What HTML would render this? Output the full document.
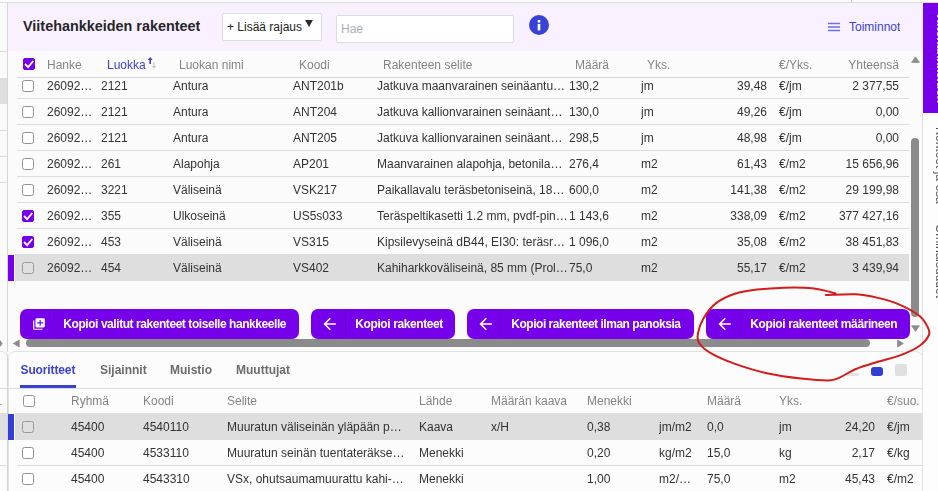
<!DOCTYPE html>
<html><head><meta charset="utf-8"><title>Viitehankkeiden rakenteet</title>
<style>
*{box-sizing:border-box;margin:0;padding:0}
html,body{width:938px;height:491px;overflow:hidden;background:#fff}
body{font-family:"Liberation Sans",sans-serif;font-size:12px;color:#333;position:relative}
.abs,.t,.cb,.ln,.btn{position:absolute}
.t{white-space:nowrap;line-height:14px;height:14px;overflow:hidden}
.el{text-overflow:ellipsis}
.r{text-align:right}
.h{color:#848484}
.cb{width:12px;height:12px;border:1px solid #929292;border-radius:2.5px;background:#fff}
.cb.dim{background:#e0e0e0;border-color:#9a9a9a}
.cb.on{background:#7600ea;border-color:#7600ea;border-radius:2px}
.cb.on svg{position:absolute;left:-1px;top:-1px}
.ln{height:1px;background:#dcdcdc}
.btn{height:30px;top:309px;background:#7600ea;border-radius:7px;color:#fff;font-weight:bold}
.btn .dv{position:absolute;left:34px;top:2px;bottom:2px;width:1px;background:#6a00d4}
.btn .tx{position:absolute;left:44px;top:8px;line-height:14px;white-space:nowrap;letter-spacing:-0.4px}
.btn svg{position:absolute}
.tab{position:absolute;top:363px;font-weight:bold;color:#6b6b6b;line-height:14px;white-space:nowrap}
</style></head><body>

<div class="abs" style="left:0;top:0;width:938px;height:491px;background:#fbfbfb"></div>
<div class="abs" style="left:8px;top:3px;width:915px;height:48px;background:#f9f1ff"></div>
<div class="abs" style="left:222px;top:13px;width:100px;height:28px;background:#fff;border:1px solid #dcdcdc;border-radius:2px"></div>
<div class="abs" style="left:336px;top:15px;width:178px;height:28px;background:#fff;border:1px solid #dcdcdc;border-radius:2px"></div>
<div class="t" style="left:23px;top:17px;font-size:14.4px;font-weight:bold;color:#262626;line-height:18px;height:18px">Viitehankkeiden rakenteet</div>
<div class="t" style="left:227px;top:20px;color:#222">+ Lisää rajaus</div>
<div class="t" style="left:341px;top:22px;color:#a9adb8">Hae</div>
<div class="t" style="left:849px;top:20px;color:#3942d6">Toiminnot</div>
<div id="g" style="position:absolute;left:0;top:0;width:938px;height:491px;will-change:transform">
<div class="abs" style="left:0;top:3px;width:7px;height:348px;background:#fafafa"></div>
<div class="abs" style="left:0;top:78px;width:7px;height:26px;background:#dedede"></div>
<div class="abs" style="left:7px;top:3px;width:1px;height:349px;background:#d6d6d6"></div>
<div class="abs" style="left:0;top:51px;width:7px;height:1px;background:#d8d8d8"></div>
<div class="abs" style="left:0;top:130px;width:7px;height:1px;background:#dcdcdc"></div>
<div class="abs" style="left:0;top:156px;width:7px;height:1px;background:#dcdcdc"></div>
<div class="abs" style="left:0;top:182px;width:7px;height:1px;background:#dcdcdc"></div>
<div class="abs" style="left:0;top:0;width:938px;height:2px;background:#fdfdfd"></div>
<div class="abs" style="left:0;top:2px;width:938px;height:1px;background:#dadada"></div>
<div class="abs" style="left:851px;top:0;width:1px;height:2px;background:#ccc"></div>
<svg class="abs" style="left:305px;top:20px" width="8" height="7" viewBox="0 0 8 7"><path d="M0.1 0.1 L7.9 0.1 L4 7 Z" fill="#2c2c2c"/></svg>
<svg class="abs" style="left:529px;top:15px" width="20" height="20" viewBox="0 0 20 20"><circle cx="10" cy="10" r="10" fill="#3942d6"/><rect x="8.7" y="5" width="2.6" height="2.5" fill="#fff"/><rect x="8.7" y="8.9" width="2.6" height="6.5" fill="#fff"/></svg>
<svg class="abs" style="left:828px;top:22px" width="12" height="10" viewBox="0 0 12 10"><path d="M0 1.6H12M0 5H12M0 8.4H12" stroke="#6a70e2" stroke-width="1.5"/></svg>
<div class="abs" style="left:923px;top:3px;width:15px;height:110px;background:#7600ea"></div>
<div class="abs" style="left:923px;top:113px;width:15px;height:378px;background:#fdfdfd"></div>
<div class="abs" style="left:922px;top:113px;width:1px;height:378px;background:#e0e0e0"></div>
<div class="abs" style="left:948px;top:12px;width:100px;height:14px;transform-origin:0 0;transform:rotate(90deg);color:#fff;font-weight:bold;font-size:12px;line-height:14px;white-space:nowrap">Viitehankkeiden</div>
<div class="abs" style="left:947px;top:127px;width:90px;height:14px;transform-origin:0 0;transform:rotate(90deg);color:#555;font-size:12px;line-height:14px;white-space:nowrap">Kohteet ja osa</div>
<div class="abs" style="left:947px;top:224px;width:90px;height:14px;transform-origin:0 0;transform:rotate(90deg);color:#555;font-size:12px;line-height:14px;white-space:nowrap">Ominaisuudet</div>
<div class="cb on" style="left:23px;top:58px"><svg viewBox="0 0 12 12" width="12" height="12"><path d="M2 6 L5.1 9.1 L10.3 3" fill="none" stroke="#fff" stroke-width="1.8"/></svg></div>
<div class="t h" style="left:47px;top:58px">Hanke</div>
<div class="t h" style="left:179px;top:58px">Luokan nimi</div>
<div class="t h" style="left:299px;top:58px">Koodi</div>
<div class="t h" style="left:383px;top:58px">Rakenteen selite</div>
<div class="t h" style="left:575px;top:58px">Määrä</div>
<div class="t h" style="left:647px;top:58px">Yks.</div>
<div class="t h" style="left:779px;top:58px">€/Yks.</div>
<div class="t" style="left:107px;top:58px;color:#3942d6">Luokka</div>
<svg class="abs" style="left:146px;top:56px" width="12" height="14" viewBox="0 0 12 14"><path d="M4.2 1 L1.7 4.1 H3.4 V8 H5 V4.1 H6.7 Z" fill="#3942d6"/><path d="M8 12.7 L5.8 9.9 H7.4 V6 H8.6 V9.9 H10.2 Z" fill="#c8c8c8"/></svg>
<div class="t h r" style="left:799px;width:100px;top:58px">Yhteensä</div>
<div class="ln" style="left:17px;top:77px;width:892px;background:#d6d6d6"></div>
<div class="abs" style="left:8px;top:78px;width:901px;height:225px;overflow:hidden">
<div class="ln" style="left:9px;top:20px;width:892px"></div>
<div class="cb" style="left:14px;top:2px"></div>
<div class="t el" style="left:39px;top:1px;width:60px">26092…</div>
<div class="t" style="left:93px;top:1px">2121</div>
<div class="t" style="left:165px;top:1px">Antura</div>
<div class="t" style="left:285px;top:1px">ANT201b</div>
<div class="t" style="left:369px;top:1px;width:196px">Jatkuva maanvarainen seinäantu…</div>
<div class="t" style="left:561px;top:1px">130,2</div>
<div class="t" style="left:633px;top:1px">jm</div>
<div class="t r" style="left:659px;width:100px;top:1px">39,48</div>
<div class="t" style="left:771px;top:1px">€/jm</div>
<div class="t r" style="left:791px;width:100px;top:1px">2 377,55</div>
<div class="ln" style="left:9px;top:46px;width:892px"></div>
<div class="cb" style="left:14px;top:28px"></div>
<div class="t el" style="left:39px;top:27px;width:60px">26092…</div>
<div class="t" style="left:93px;top:27px">2121</div>
<div class="t" style="left:165px;top:27px">Antura</div>
<div class="t" style="left:285px;top:27px">ANT204</div>
<div class="t" style="left:369px;top:27px;width:196px">Jatkuva kallionvarainen seinäant…</div>
<div class="t" style="left:561px;top:27px">130,0</div>
<div class="t" style="left:633px;top:27px">jm</div>
<div class="t r" style="left:659px;width:100px;top:27px">49,26</div>
<div class="t" style="left:771px;top:27px">€/jm</div>
<div class="t r" style="left:791px;width:100px;top:27px">0,00</div>
<div class="ln" style="left:9px;top:72px;width:892px"></div>
<div class="cb" style="left:14px;top:54px"></div>
<div class="t el" style="left:39px;top:53px;width:60px">26092…</div>
<div class="t" style="left:93px;top:53px">2121</div>
<div class="t" style="left:165px;top:53px">Antura</div>
<div class="t" style="left:285px;top:53px">ANT205</div>
<div class="t" style="left:369px;top:53px;width:196px">Jatkuva kallionvarainen seinäant…</div>
<div class="t" style="left:561px;top:53px">298,5</div>
<div class="t" style="left:633px;top:53px">jm</div>
<div class="t r" style="left:659px;width:100px;top:53px">48,98</div>
<div class="t" style="left:771px;top:53px">€/jm</div>
<div class="t r" style="left:791px;width:100px;top:53px">0,00</div>
<div class="ln" style="left:9px;top:98px;width:892px"></div>
<div class="cb" style="left:14px;top:80px"></div>
<div class="t el" style="left:39px;top:79px;width:60px">26092…</div>
<div class="t" style="left:93px;top:79px">261</div>
<div class="t" style="left:165px;top:79px">Alapohja</div>
<div class="t" style="left:285px;top:79px">AP201</div>
<div class="t" style="left:369px;top:79px;width:196px">Maanvarainen alapohja, betonila…</div>
<div class="t" style="left:561px;top:79px">276,4</div>
<div class="t" style="left:633px;top:79px">m2</div>
<div class="t r" style="left:659px;width:100px;top:79px">61,43</div>
<div class="t" style="left:771px;top:79px">€/m2</div>
<div class="t r" style="left:791px;width:100px;top:79px">15 656,96</div>
<div class="ln" style="left:9px;top:124px;width:892px"></div>
<div class="cb" style="left:14px;top:106px"></div>
<div class="t el" style="left:39px;top:105px;width:60px">26092…</div>
<div class="t" style="left:93px;top:105px">3221</div>
<div class="t" style="left:165px;top:105px">Väliseinä</div>
<div class="t" style="left:285px;top:105px">VSK217</div>
<div class="t" style="left:369px;top:105px;width:196px">Paikallavalu teräsbetoniseinä, 18…</div>
<div class="t" style="left:561px;top:105px">600,0</div>
<div class="t" style="left:633px;top:105px">m2</div>
<div class="t r" style="left:659px;width:100px;top:105px">141,38</div>
<div class="t" style="left:771px;top:105px">€/m2</div>
<div class="t r" style="left:791px;width:100px;top:105px">29 199,98</div>
<div class="ln" style="left:9px;top:150px;width:892px"></div>
<div class="cb on" style="left:14px;top:132px"><svg viewBox="0 0 12 12" width="12" height="12"><path d="M2 6 L5.1 9.1 L10.3 3" fill="none" stroke="#fff" stroke-width="1.8"/></svg></div>
<div class="t el" style="left:39px;top:131px;width:60px">26092…</div>
<div class="t" style="left:93px;top:131px">355</div>
<div class="t" style="left:165px;top:131px">Ulkoseinä</div>
<div class="t" style="left:285px;top:131px">US5s033</div>
<div class="t" style="left:369px;top:131px;width:196px">Teräspeltikasetti 1.2 mm, pvdf-pin…</div>
<div class="t" style="left:561px;top:131px">1 143,6</div>
<div class="t" style="left:633px;top:131px">m2</div>
<div class="t r" style="left:659px;width:100px;top:131px">338,09</div>
<div class="t" style="left:771px;top:131px">€/m2</div>
<div class="t r" style="left:791px;width:100px;top:131px">377 427,16</div>
<div class="ln" style="left:9px;top:176px;width:892px"></div>
<div class="cb on" style="left:14px;top:158px"><svg viewBox="0 0 12 12" width="12" height="12"><path d="M2 6 L5.1 9.1 L10.3 3" fill="none" stroke="#fff" stroke-width="1.8"/></svg></div>
<div class="t el" style="left:39px;top:157px;width:60px">26092…</div>
<div class="t" style="left:93px;top:157px">453</div>
<div class="t" style="left:165px;top:157px">Väliseinä</div>
<div class="t" style="left:285px;top:157px">VS315</div>
<div class="t" style="left:369px;top:157px;width:196px">Kipsilevyseinä dB44, EI30: teräsr…</div>
<div class="t" style="left:561px;top:157px">1 096,0</div>
<div class="t" style="left:633px;top:157px">m2</div>
<div class="t r" style="left:659px;width:100px;top:157px">35,08</div>
<div class="t" style="left:771px;top:157px">€/m2</div>
<div class="t r" style="left:791px;width:100px;top:157px">38 451,83</div>
<div class="abs" style="left:7px;top:176px;width:894px;height:27px;background:#dedede"></div>
<div class="abs" style="left:0;top:177px;width:6px;height:26px;background:#7600ea"></div>
<div class="cb dim" style="left:14px;top:184px"></div>
<div class="t el" style="left:39px;top:183px;width:60px">26092…</div>
<div class="t" style="left:93px;top:183px">454</div>
<div class="t" style="left:165px;top:183px">Väliseinä</div>
<div class="t" style="left:285px;top:183px">VS402</div>
<div class="t" style="left:369px;top:183px;width:196px">Kahiharkkoväliseinä, 85 mm (Prol…</div>
<div class="t" style="left:561px;top:183px">75,0</div>
<div class="t" style="left:633px;top:183px">m2</div>
<div class="t r" style="left:659px;width:100px;top:183px">55,17</div>
<div class="t" style="left:771px;top:183px">€/m2</div>
<div class="t r" style="left:791px;width:100px;top:183px">3 439,94</div>
</div>
<svg class="abs" style="left:910px;top:55px" width="11" height="9" viewBox="0 0 11 9"><path d="M5.5 1.8 L9.4 7.4 H1.6 Z" fill="#8b8b8b" stroke="#8b8b8b" stroke-width="0.8" stroke-linejoin="round"/></svg>
<div class="abs" style="left:911px;top:138px;width:8px;height:179px;background:#8b8b8b;border-radius:4px"></div>
<svg class="abs" style="left:910px;top:324px" width="11" height="9" viewBox="0 0 11 9"><path d="M5.5 7.4 L9.4 1.8 H1.6 Z" fill="#8b8b8b" stroke="#8b8b8b" stroke-width="0.8" stroke-linejoin="round"/></svg>
<div class="btn" style="left:20px;width:279px"><svg style="left:12px;top:8px" width="14" height="14" viewBox="0 0 24 24"><path fill="#fff" d="M4 6H2v14c0 1.1.9 2 2 2h14v-2H4V6zm16-4H8c-1.1 0-2 .9-2 2v12c0 1.1.9 2 2 2h12c1.100 0 2-.9 2-2V4c0-1.100-.9-2-2-2zm-1 9h-4v4h-2v-4H9V9h4V5h2v4h4v2z"/></svg><div class="dv"></div><div class="tx" style="letter-spacing:-0.44px;left:43.3px">Kopioi valitut rakenteet toiselle hankkeelle</div></div>
<div class="btn" style="left:311px;width:144px"><svg style="left:12px;top:8px" width="14" height="14" viewBox="0 0 14 14"><path d="M12.8 7 H1.8 M7.3 1.3 L1.6 7 L7.3 12.7" fill="none" stroke="#fff" stroke-width="1.6"/></svg><div class="dv"></div><div class="tx" style="letter-spacing:-0.4px;left:44.3px">Kopioi rakenteet</div></div>
<div class="btn" style="left:467px;width:227px"><svg style="left:12px;top:8px" width="14" height="14" viewBox="0 0 14 14"><path d="M12.8 7 H1.8 M7.3 1.3 L1.6 7 L7.3 12.7" fill="none" stroke="#fff" stroke-width="1.6"/></svg><div class="dv"></div><div class="tx" style="letter-spacing:-0.48px;left:44.3px">Kopioi rakenteet ilman panoksia</div></div>
<div class="btn" style="left:706px;width:204px"><svg style="left:12px;top:8px" width="14" height="14" viewBox="0 0 14 14"><path d="M12.8 7 H1.8 M7.3 1.3 L1.6 7 L7.3 12.7" fill="none" stroke="#fff" stroke-width="1.6"/></svg><div class="dv"></div><div class="tx" style="letter-spacing:-0.4px;left:44.3px">Kopioi rakenteet määrineen</div></div>
<svg class="abs" style="left:0;top:339px" width="3" height="9" viewBox="0 0 3 9"><path d="M0 1 L2.6 4.5 L0 8 Z" fill="#8b8b8b"/></svg>
<svg class="abs" style="left:12px;top:339px" width="9" height="9" viewBox="0 0 9 9"><path d="M1.4 4.5 L7.2 1 V8 Z" fill="#8b8b8b" stroke="#8b8b8b" stroke-width="0.8" stroke-linejoin="round"/></svg>
<div class="abs" style="left:26px;top:339px;width:844px;height:8px;background:#8b8b8b;border-radius:4px"></div>
<svg class="abs" style="left:896px;top:339px" width="9" height="9" viewBox="0 0 9 9"><path d="M7.4 4.5 L1.6 1 V8 Z" fill="#8b8b8b" stroke="#8b8b8b" stroke-width="0.8" stroke-linejoin="round"/></svg>
<div class="abs" style="left:0;top:351px;width:8px;height:141px;background:#fbfbfb;border-top:1px solid #e2e2e2;border-right:1px solid #d4d4d4;border-top-right-radius:6px"></div>
<div class="abs" style="left:8px;top:351px;width:915px;height:150px;background:#fcfcfc;border:1px solid #e2e2e2;border-radius:7px 7px 0 0"></div>
<div class="abs" style="left:0;top:413px;width:7px;height:27px;background:#dedede"></div>
<div class="abs" style="left:0;top:404px;width:2px;height:1px;background:#aaa"></div>
<div class="abs" style="left:0;top:388px;width:7px;height:1px;background:#dcdcdc"></div>
<div class="abs" style="left:0;top:465px;width:7px;height:1px;background:#dcdcdc"></div>
<div class="tab" style="left:20.5px;color:#3942d6;letter-spacing:-0.12px">Suoritteet</div>
<div class="tab" style="left:100px">Sijainnit</div>
<div class="tab" style="left:170px">Muistio</div>
<div class="tab" style="left:236px">Muuttujat</div>
<div class="abs" style="left:20px;top:385px;width:56px;height:3px;background:#3942d6"></div>
<div class="ln" style="left:9px;top:388px;width:913px;background:#dcdcdc"></div>
<div class="abs" style="left:847px;top:373px;width:12px;height:3px;background:#e2e2e2;border-radius:1px"></div>
<div class="abs" style="left:871px;top:367px;width:12px;height:9px;background:#3040d0;border-radius:3px"></div>
<div class="abs" style="left:895px;top:364px;width:12px;height:12px;background:#e0e0e0;border-radius:2px"></div>
<div class="cb" style="left:23px;top:395px"></div>
<div class="t h" style="left:71px;top:394px">Ryhmä</div>
<div class="t h" style="left:143px;top:394px">Koodi</div>
<div class="t h" style="left:227px;top:394px">Selite</div>
<div class="t h" style="left:419px;top:394px">Lähde</div>
<div class="t h" style="left:491px;top:394px">Määrän kaava</div>
<div class="t h" style="left:587px;top:394px">Menekki</div>
<div class="t h" style="left:707px;top:394px">Määrä</div>
<div class="t h" style="left:779px;top:394px">Yks.</div>
<div class="t h" style="left:887px;top:394px">€/suo.</div>
<div class="abs" style="left:15px;top:413px;width:907px;height:27px;background:#dedede"></div>
<div class="abs" style="left:8px;top:414px;width:6px;height:26px;background:#3440d4"></div>
<div class="cb dim" style="left:22px;top:421px"></div>
<div class="t" style="left:71px;top:420px">45400</div>
<div class="t" style="left:143px;top:420px">4540110</div>
<div class="t" style="left:227px;top:420px;width:186px">Muuratun väliseinän yläpään p…</div>
<div class="t" style="left:419px;top:420px">Kaava</div>
<div class="t" style="left:491px;top:420px">x/H</div>
<div class="t" style="left:587px;top:420px">0,38</div>
<div class="t" style="left:659px;top:420px;width:44px">jm/m2</div>
<div class="t" style="left:707px;top:420px">0,0</div>
<div class="t" style="left:779px;top:420px">jm</div>
<div class="t r" style="left:775px;width:100px;top:420px">24,20</div>
<div class="t" style="left:887px;top:420px">€/jm</div>
<div class="ln" style="left:17px;top:465px;width:905px"></div>
<div class="cb" style="left:22px;top:447px"></div>
<div class="t" style="left:71px;top:446px">45400</div>
<div class="t" style="left:143px;top:446px">4533110</div>
<div class="t" style="left:227px;top:446px;width:186px">Muuratun seinän tuentateräkse…</div>
<div class="t" style="left:419px;top:446px">Menekki</div>
<div class="t" style="left:491px;top:446px"></div>
<div class="t" style="left:587px;top:446px">0,20</div>
<div class="t" style="left:659px;top:446px;width:44px">kg/m2</div>
<div class="t" style="left:707px;top:446px">15,0</div>
<div class="t" style="left:779px;top:446px">kg</div>
<div class="t r" style="left:775px;width:100px;top:446px">2,17</div>
<div class="t" style="left:887px;top:446px">€/kg</div>
<div class="cb" style="left:22px;top:473px"></div>
<div class="t" style="left:71px;top:472px">45400</div>
<div class="t" style="left:143px;top:472px">4543310</div>
<div class="t" style="left:227px;top:472px;width:186px">VSx, ohutsaumamuurattu kahi-…</div>
<div class="t" style="left:419px;top:472px">Menekki</div>
<div class="t" style="left:491px;top:472px"></div>
<div class="t" style="left:587px;top:472px">1,00</div>
<div class="t" style="left:659px;top:472px;width:44px">m2/…</div>
<div class="t" style="left:707px;top:472px">75,0</div>
<div class="t" style="left:779px;top:472px">m2</div>
<div class="t r" style="left:775px;width:100px;top:472px">45,43</div>
<div class="t" style="left:887px;top:472px">€/m2</div>
<svg class="abs" style="left:0;top:0" width="938" height="491" viewBox="0 0 938 491"><path d="M835.4 293.2 C831.5 292.4 820.5 289.2 812.0 288.3 C803.5 287.4 793.7 287.5 784.5 287.7 C775.3 287.9 765.2 288.6 757.0 289.6 C748.8 290.6 741.9 291.5 735.0 293.8 C728.1 296.1 721.1 299.3 715.8 303.4 C710.5 307.5 706.4 313.5 703.4 318.5 C700.4 323.5 698.6 329.5 697.9 333.6 C697.2 337.7 697.2 340.1 699.3 343.3 C701.4 346.5 704.3 349.5 710.3 352.9 C716.2 356.3 725.4 360.5 735.0 363.9 C744.6 367.3 757.0 371.1 768.0 373.5 C779.0 375.9 790.9 377.4 801.0 378.5 C811.1 379.6 822.1 380.5 828.5 380.4 C834.9 380.2 834.9 379.5 839.5 377.6 C844.1 375.7 849.6 371.6 856.0 369.0 C862.4 366.4 870.7 364.1 878.0 361.8 C885.3 359.5 893.1 358.0 900.0 355.4 C906.9 352.8 914.5 349.4 919.3 346.0 C924.1 342.6 927.5 338.2 928.9 335.0 C930.3 331.8 929.1 330.0 927.5 326.8 C925.9 323.6 923.9 319.5 919.3 315.8 C914.7 312.1 906.9 307.8 900.0 304.8 C893.1 301.8 885.3 299.6 878.0 297.9 C870.7 296.1 864.7 294.8 856.0 294.3 C847.3 293.8 830.8 295.0 825.8 295.1" fill="none" stroke="#d41c1c" stroke-width="2" stroke-linecap="round" stroke-linejoin="round"/></svg>
</div>
</body></html>
